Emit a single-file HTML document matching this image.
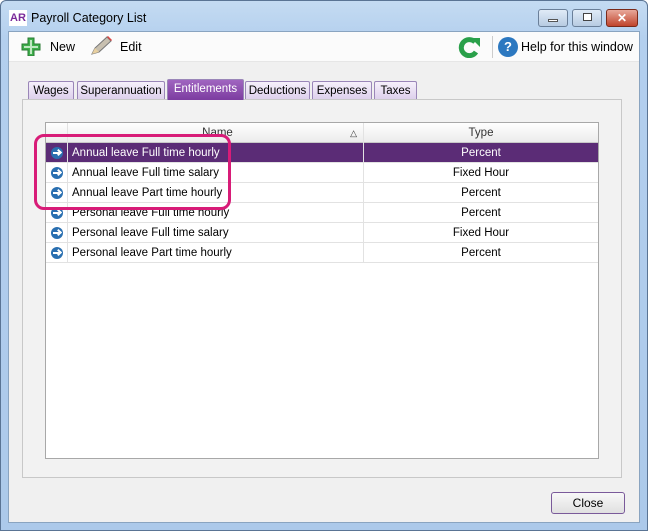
<!DOCTYPE html>
<html><head><style>
*{box-sizing:border-box;margin:0;padding:0}
body{width:648px;height:531px;overflow:hidden;font-family:"Liberation Sans",sans-serif;font-size:12px;color:#000;background:#fff;position:relative}
.frame{position:absolute;left:0;top:0;width:648px;height:531px;background:linear-gradient(#c4dbf2,#b3cfee 40px,#acc9ea);border:1px solid #5a7494;border-radius:6px 6px 0 0}
.inner{position:absolute;left:8px;top:31px;width:632px;height:492px;background:#f0f0f0;border:1px solid #8aa4c0}
.tb{position:absolute;left:0;top:0;width:630px;height:30px;background:#fbfbfb;border-bottom:1px solid #e6e6e6}
.abs{position:absolute}
.tab{position:absolute;top:81px;height:18px;border:1px solid #9a86b8;border-bottom:none;background:linear-gradient(#f6f0fb,#ddd0ec);font-size:11.5px;padding:3px 0 0;text-align:center;border-radius:2px 2px 0 0}
.tab.on{background:linear-gradient(#a065c0,#7c3ca0);color:#fff;top:79px;height:21px;padding-top:3px}
.panel{position:absolute;left:22px;top:99px;width:600px;height:379px;background:#f2f2f2;border:1px solid #c8c8c8}
.grid{position:absolute;left:45px;top:122px;width:554px;height:337px;background:#fff;border:1px solid #a8a8a8}
.row{position:absolute;left:0;width:552px;height:20px;border-bottom:1px solid #e2e2e2}
.row div{position:absolute;top:0;height:20px;line-height:20px;font-size:11.5px}
.c0{left:0;width:22px;border-right:1px solid #e2e2e2}
.c1{left:22px;width:296px;padding-left:4px;border-right:1px solid #e2e2e2}
.c2{left:318px;width:234px;text-align:center}
.arr{position:absolute;left:5px;top:4px;width:12px;height:12px;border-radius:50%;background:#2a6fb0}
.arr:after{content:"";position:absolute;left:2px;top:5px;width:6px;height:2px;background:#fff}
.arr:before{content:"";position:absolute;left:5px;top:3px;width:3px;height:3px;border-top:2px solid #fff;border-right:2px solid #fff;transform:rotate(45deg)}
.sel{background:#5b2c76;color:#fff}
.btn{position:absolute;height:18px;top:9px;border:1px solid #6a7f99;border-radius:3px;background:linear-gradient(#e0ebf7,#b7cbe2)}
</style></head><body>
<div class="frame"></div>
<div class="abs" style="left:9px;top:10px;width:18px;height:16px;background:#fff;color:#7b2a9a;font-weight:bold;font-size:11px;line-height:16px;text-align:center">AR</div>
<div class="abs" style="left:31px;top:11px;font-size:12.5px">Payroll Category List</div>
<div class="btn" style="left:538px;width:30px"><div class="abs" style="left:9px;top:9px;width:10px;height:3px;background:#fff;border:1px solid #555"></div></div>
<div class="btn" style="left:572px;width:30px"><div class="abs" style="left:10px;top:3px;width:9px;height:8px;border:1px solid #444;background:#fff"></div></div>
<div class="btn" style="left:606px;width:32px;background:linear-gradient(#e8a89a,#c0442c);border-color:#7a2a1a;color:#fff;font-weight:bold;text-align:center;line-height:16px">✕</div>
<div class="inner">
<div class="tb"></div>
</div>
<svg class="abs" style="left:20px;top:36px" width="22" height="20"><path d="M8 2h6v6h6v6h-6v6h-6v-6H2V8h6z" fill="#3fb04c" stroke="#2a7a33"/><path d="M10 4h2v6h6v2h-6v6h-2v-6H4v-2h6z" fill="#bfe8c2"/></svg>
<div class="abs" style="left:50px;top:40px;font-size:12.5px">New</div>
<svg class="abs" style="left:89px;top:35px" width="24" height="22"><path d="M3 19l3-6 12-11 4 4-12 11z" fill="#c8c0b0" stroke="#777"/><path d="M18 2l4 4 1-1-4-4z" fill="#d44"/><path d="M3 19l3-6 4 4z" fill="#e8d0a0"/></svg>
<div class="abs" style="left:120px;top:40px;font-size:12.5px">Edit</div>
<svg class="abs" style="left:458px;top:36px" width="24" height="22"><path d="M17 6A8 8 0 1 0 18 16" fill="none" stroke="#2aa04a" stroke-width="5"/><path d="M13 2h9v9z" fill="#2aa04a"/></svg>
<div class="abs" style="left:492px;top:36px;width:1px;height:22px;background:#ccc"></div>
<div class="abs" style="left:498px;top:37px;width:20px;height:20px;border-radius:50%;background:#2c78c0;color:#fff;font-weight:bold;text-align:center;line-height:20px;font-size:13px">?</div>
<div class="abs" style="left:521px;top:40px;font-size:12.5px">Help for this window</div>
<div class="panel"></div>
<div class="tab" style="left:28px;width:46px">Wages</div>
<div class="tab" style="left:77px;width:88px">Superannuation</div>
<div class="tab on" style="left:167px;width:77px">Entitlements</div>
<div class="tab" style="left:245px;width:65px">Deductions</div>
<div class="tab" style="left:312px;width:60px">Expenses</div>
<div class="tab" style="left:374px;width:43px">Taxes</div>
<div class="grid">
<div class="row" style="top:0;background:linear-gradient(#fff,#ececec);border-bottom:1px solid #c8c8c8"><div class="c0"></div><div class="c1" style="text-align:center;color:#333">Name<span style="position:absolute;right:6px;font-size:9px">△</span></div><div class="c2" style="color:#333">Type</div></div>
<div class="row sel" style="top:20px"><div class="c0"><span class="arr"></span></div><div class="c1">Annual leave Full time hourly</div><div class="c2">Percent</div></div>
<div class="row" style="top:40px"><div class="c0"><span class="arr"></span></div><div class="c1">Annual leave Full time salary</div><div class="c2">Fixed Hour</div></div>
<div class="row" style="top:60px"><div class="c0"><span class="arr"></span></div><div class="c1">Annual leave Part time hourly</div><div class="c2">Percent</div></div>
<div class="row" style="top:80px"><div class="c0"><span class="arr"></span></div><div class="c1">Personal leave Full time hourly</div><div class="c2">Percent</div></div>
<div class="row" style="top:100px"><div class="c0"><span class="arr"></span></div><div class="c1">Personal leave Full time salary</div><div class="c2">Fixed Hour</div></div>
<div class="row" style="top:120px"><div class="c0"><span class="arr"></span></div><div class="c1">Personal leave Part time hourly</div><div class="c2">Percent</div></div>
</div>
<div class="abs" style="left:34px;top:134px;width:197px;height:76px;border:3px solid #d81c78;border-radius:10px"></div>
<div class="abs" style="left:551px;top:492px;width:74px;height:22px;border:1px solid #7a5a9a;border-radius:3px;background:linear-gradient(#f8f8f8,#e0e0e0);text-align:center;line-height:20px">Close</div>
</body></html>
